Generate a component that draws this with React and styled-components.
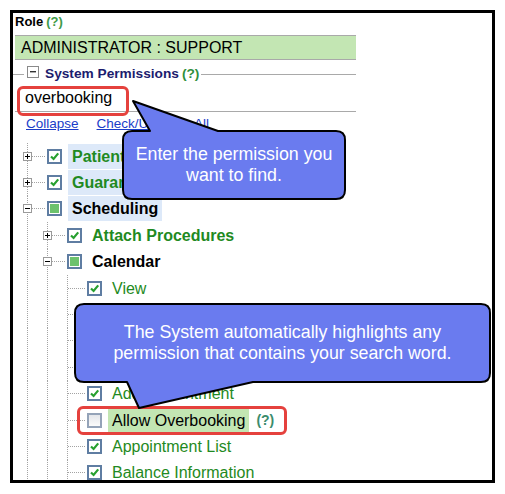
import React from 'react';
import styled, { createGlobalStyle } from 'styled-components';

const GlobalStyle = createGlobalStyle`
  html, body {
    margin: 0;
    background: #fff;
  }

  body {
    font-family: "Liberation Sans", Arial, sans-serif;
  }
`;

const dotV = 'repeating-linear-gradient(to bottom, #a3a3a3 0 1px, transparent 1px 2px)';
const dotH = 'repeating-linear-gradient(to right, #a3a3a3 0 1px, transparent 1px 2px)';

const Frame = styled.div`
  position: relative;
  box-sizing: border-box;
  width: 485px;
  height: 473px;
  margin: 10px 0 0 10px;
  padding-top: 1px;
  border: 3px solid #000;
  overflow: hidden;
`;

const RoleLine = styled.div`
  margin: 0 0 5px 2px;
  font-size: 13px;
  font-weight: 700;
  line-height: 16px;
  color: #000;
`;

const Help = styled.span`
  margin-left: ${({ $gap }) => $gap || 3}px;
  font-size: ${({ $size }) => $size || 13}px;
  font-weight: 700;
  color: ${({ $tone }) => $tone || '#3e9a48'};
`;

const RoleBar = styled.div`
  box-sizing: border-box;
  width: 341px;
  height: 25px;
  margin-left: 2px;
  padding-left: 6px;
  border-top: 1px solid #a9a9a9;
  border-bottom: 1px solid #a9a9a9;
  background: #c3e6b3;
  font-size: 16px;
  line-height: 23px;
  color: #000;
`;

const LegendRow = styled.div`
  display: flex;
  align-items: center;
  width: 343px;
  height: 20px;
  margin-top: 3px;
`;

const LegendLine = styled.span`
  flex: ${({ $grow }) => ($grow ? 1 : 'none')};
  width: ${({ $grow }) => ($grow ? 'auto' : '11px')};
  height: 1px;
  margin-top: 3px;
  margin-left: ${({ $grow }) => ($grow ? 2 : 0)}px;
  background: #a9a9a9;
`;

const CollapseBox = styled.span`
  flex: none;
  box-sizing: border-box;
  width: 12px;
  height: 12px;
  margin: -2px 0 0 3px;
  border: 1px solid #8a8a8a;
  background: #fff;
  display: flex;
  align-items: center;
  justify-content: center;
`;

const LegendTitle = styled.span`
  margin-left: 6px;
  font-size: 13.7px;
  font-weight: 700;
  color: #1c1c6e;
  white-space: nowrap;
`;

const Search = styled.input`
  display: block;
  box-sizing: border-box;
  width: 341px;
  height: 27px;
  margin: 2px 0 0 2px;
  padding: 0 0 0 10px;
  border: none;
  border-bottom: 1px solid #a9a9a9;
  outline: none;
  background: transparent;
  font-family: "Liberation Sans", Arial, sans-serif;
  font-size: 16px;
  color: #000;
`;

const Links = styled.div`
  display: flex;
  gap: 18px;
  margin: 4px 0 0 13px;
  font-size: 13.5px;
  line-height: 16px;

  a {
    color: #1a3cc8;
    text-decoration: underline;
  }
`;

const Tree = styled.div`
  margin: 11px 0 0 4px;
`;

const Row = styled.div`
  display: flex;
  align-items: center;
  height: 26.4px;
`;

const Guide = styled.span`
  flex: none;
  align-self: stretch;
  width: 20px;
  background: ${dotV} 10px 0 / 1px 100% no-repeat;
`;

const Branch = styled.span`
  flex: none;
  align-self: stretch;
  box-sizing: border-box;
  width: 30px;
  padding-left: 6px;
  display: flex;
  align-items: center;
  background:
    ${dotV} 10px 0 / 1px 100% no-repeat,
    ${dotH} 11px 50% / 17px 1px no-repeat;
`;

const Toggle = styled.span`
  box-sizing: border-box;
  width: 9px;
  height: 9px;
  border: 1px solid #9a9a9a;
  background: #fff;
  display: flex;
`;

const Box = styled.span`
  flex: none;
  box-sizing: border-box;
  width: 15px;
  height: 15px;
  border: 2px solid ${({ $state }) => ($state === 'off' ? '#94a3b8' : '#5f7da2')};
  background: ${({ $state }) => ($state === 'off' ? 'linear-gradient(#e4e6ea, #fbfbfb)' : '#fff')};
  display: flex;
  align-items: center;
  justify-content: center;
`;

const Partial = styled.span`
  width: 9px;
  height: 9px;
  background: #6cc26c;
`;

const Label = styled.span`
  margin-left: 6px;
  padding: 0 4px;
  height: 25px;
  line-height: 25px;
  font-size: 16px;
  font-weight: ${({ $bold }) => ($bold ? 700 : 400)};
  color: ${({ $black }) => ($black ? '#000' : '#1f8a22')};
  background: ${({ $hl }) =>
    $hl === 'blue' ? '#dde9f9' : $hl === 'green' ? '#c3e6b3' : 'transparent'};
  white-space: nowrap;
`;

const Mark = styled.div`
  position: absolute;
  left: ${({ $x }) => $x}px;
  top: ${({ $y }) => $y}px;
  box-sizing: border-box;
  width: ${({ $w }) => $w}px;
  height: ${({ $h }) => $h}px;
  border: 3px solid #e5413d;
  border-radius: 6px;
`;

const CalloutWrap = styled.div`
  position: absolute;
  left: ${({ $x }) => $x}px;
  top: ${({ $y }) => $y}px;
  width: ${({ $w }) => $w}px;
  height: ${({ $h }) => $h}px;
  display: flex;
  align-items: center;
  justify-content: center;
  z-index: 2;

  svg {
    position: absolute;
    left: 0;
    top: 0;
    overflow: visible;
  }
`;

const CalloutText = styled.span`
  position: relative;
  font-size: 17.8px;
  line-height: 21px;
  color: #fff;
  text-align: center;
  white-space: nowrap;
`;

const bubblePath = (w, h, r, t) => {
  const top =
    t.edge === 'top' ? `L${t.a} 0 L${t.x} ${t.y} L${t.b} 0 ` : '';
  const bottom =
    t.edge === 'bottom' ? `L${t.b} ${h} L${t.x} ${t.y} L${t.a} ${h} ` : '';
  return (
    `M${r} 0 ${top}L${w - r} 0 Q${w} 0 ${w} ${r} L${w} ${h - r} Q${w} ${h} ${w - r} ${h} ` +
    `${bottom}L${r} ${h} Q0 ${h} 0 ${h - r} L0 ${r} Q0 0 ${r} 0 Z`
  );
};

const Callout = ({ x, y, w, h, tail, children }) => (
  <CalloutWrap $x={x} $y={y} $w={w} $h={h}>
    <svg width={w} height={h} viewBox={`0 0 ${w} ${h}`}>
      <path
        d={bubblePath(w, h, 9, tail)}
        fill="#6a7bef"
        stroke="#000"
        strokeWidth="2"
        strokeLinejoin="round"
      />
    </svg>
    <CalloutText>{children}</CalloutText>
  </CalloutWrap>
);

const ToggleIcon = ({ open }) => (
  <svg width="7" height="7" viewBox="0 0 7 7">
    <rect x="1" y="3" width="5" height="1" fill="#000" />
    {!open && <rect x="3" y="1" width="1" height="5" fill="#000" />}
  </svg>
);

const CheckBox = ({ state }) => (
  <Box $state={state}>
    {state === 'on' && (
      <svg width="11" height="11" viewBox="0 0 11 11">
        <path d="M2 5.5 L4.6 8 L9.2 2.4" fill="none" stroke="#27a02f" strokeWidth="2.2" />
      </svg>
    )}
    {state === 'part' && <Partial />}
  </Box>
);

const items = [
  { level: 0, toggle: 'closed', state: 'on', text: 'Patient', bold: true, hl: 'blue' },
  { level: 0, toggle: 'closed', state: 'on', text: 'Guarantor', bold: true, hl: 'blue' },
  { level: 0, toggle: 'open', state: 'part', text: 'Scheduling', bold: true, black: true, hl: 'blue' },
  { level: 1, toggle: 'closed', state: 'on', text: 'Attach Procedures', bold: true },
  { level: 1, toggle: 'open', state: 'part', text: 'Calendar', bold: true, black: true },
  { level: 2, state: 'on', text: 'View' },
  { level: 2, state: 'on', text: 'Add Block' },
  { level: 2, state: 'on', text: 'Edit Appointment' },
  { level: 2, state: 'on', text: 'Cancel Appointment' },
  { level: 2, state: 'on', text: 'Add Appointment' },
  { level: 2, state: 'off', text: 'Allow Overbooking', black: true, hl: 'green', help: true },
  { level: 2, state: 'on', text: 'Appointment List' },
  { level: 2, state: 'on', text: 'Balance Information' },
];

const App = () => (
  <>
    <GlobalStyle />
    <Frame>
      <RoleLine>
        Role<Help>(?)</Help>
      </RoleLine>
      <RoleBar>ADMINISTRATOR : SUPPORT</RoleBar>

      <LegendRow>
        <LegendLine />
        <CollapseBox>
          <svg width="6" height="2" viewBox="0 0 6 2">
            <rect x="0" y="0" width="6" height="1.4" fill="#333" />
          </svg>
        </CollapseBox>
        <LegendTitle>System Permissions</LegendTitle>
        <Help $size={13.7} $tone="#2f8f3c">(?)</Help>
        <LegendLine $grow />
      </LegendRow>

      <Search defaultValue="overbooking" />

      <Links>
        <a>Collapse</a>
        <a>Check/Uncheck All</a>
      </Links>

      <Tree>
        {items.map((item) => (
          <Row key={item.text}>
            {Array.from({ length: item.level }).map((_, i) => (
              <Guide key={i} />
            ))}
            <Branch>
              {item.toggle && (
                <Toggle>
                  <ToggleIcon open={item.toggle === 'open'} />
                </Toggle>
              )}
            </Branch>
            <CheckBox state={item.state} />
            <Label $bold={item.bold} $black={item.black} $hl={item.hl}>
              {item.text}
            </Label>
            {item.help && (
              <Help $gap={7} $size={14} $tone="#3b8c6c">
                (?)
              </Help>
            )}
          </Row>
        ))}
      </Tree>

      <Mark $x={4} $y={73} $w={112} $h={30} />
      <Mark $x={64} $y={393} $w={210} $h={29} />

      <Callout x={110} y={118} w={222} h={68} tail={{ edge: 'top', a: 27, b: 95, x: 10, y: -30 }}>
        Enter the permission you
        <br />
        want to find.
      </Callout>

      <Callout x={62} y={291} w={415} h={78} tail={{ edge: 'bottom', a: 52, b: 178, x: 64, y: 104 }}>
        The System automatically highlights any
        <br />
        permission that contains your search word.
      </Callout>
    </Frame>
  </>
);

export default App;
